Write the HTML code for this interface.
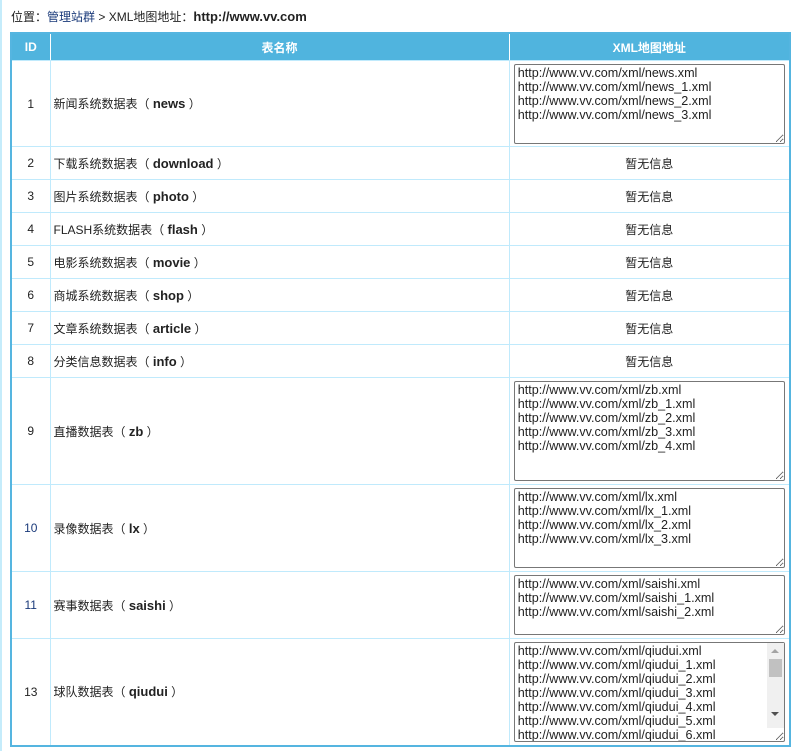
<!DOCTYPE html>
<html><head><meta charset="utf-8"><style>
body{margin:0;width:794px;height:751px;background:#fff;font-family:"Liberation Sans","Noto Sans CJK SC",sans-serif;font-size:12px;color:#222;position:relative;overflow:hidden}
.lstrip{position:absolute;left:0;top:0;width:2px;height:751px;background:#c5ecfb}
.pos{position:absolute;left:11px;top:8px;font-size:12px;color:#222}
.pos a{color:#1a3a7a;text-decoration:none}
.pos b{font-size:13px}
table{position:absolute;left:10px;top:32px;width:781px;border-collapse:collapse;border:2px solid #55b5e0;table-layout:fixed}
td,th{border:1px solid #c0eafc;padding:0;font-size:12px}
th{background:#50b4de;color:#fff;height:26px;font-weight:bold;border-color:#fff #fff #c0eafc #fff;border-top:none}
th:first-child{border-left:none}th:last-child{border-right:none}
td.id{text-align:center;color:#222}
td.id.b{color:#1a3a7a}
td.n{padding-left:3px}
td.n b{font-size:13px}
td.x{text-align:center}
textarea{display:block;margin:0 auto;width:271px;font-family:"Liberation Sans",sans-serif;font-size:12.6px;line-height:14px;border:1px solid #777;border-radius:2px;padding:1px 3px;box-sizing:border-box;resize:both;color:#222;overflow:hidden}
.sb{position:absolute;left:767px;top:643px;width:17px;height:85px;background:#f0f0f0}
.sb i{position:absolute;left:2px;top:16px;width:13px;height:18px;background:#c1c1c1}
.sb .u,.sb .d{position:absolute;left:4px;width:0;height:0;border-left:4px solid transparent;border-right:4px solid transparent}
.sb .u{top:6px;border-bottom:4px solid #a3a3a3}
.sb .d{top:69px;border-top:4px solid #505050}
</style></head><body>
<div class="lstrip"></div>
<div class="pos">位置：<a>管理站群</a> &gt; XML地图地址：<b>http://www.vv.com</b></div>
<table>
<colgroup><col style="width:39px"><col style="width:459px"><col></colgroup>
<tr><th>ID</th><th>表名称</th><th>XML地图地址</th></tr>
<tr style="height:86px"><td class="id">1</td><td class="n">新闻系统数据表（ <b>news</b> ）</td><td><textarea style="height:80px">http://www.vv.com/xml/news.xml
http://www.vv.com/xml/news_1.xml
http://www.vv.com/xml/news_2.xml
http://www.vv.com/xml/news_3.xml</textarea></td></tr>
<tr style="height:33px"><td class="id">2</td><td class="n">下载系统数据表（ <b>download</b> ）</td><td class="x">暂无信息</td></tr>
<tr style="height:33px"><td class="id">3</td><td class="n">图片系统数据表（ <b>photo</b> ）</td><td class="x">暂无信息</td></tr>
<tr style="height:33px"><td class="id">4</td><td class="n">FLASH系统数据表（ <b>flash</b> ）</td><td class="x">暂无信息</td></tr>
<tr style="height:33px"><td class="id">5</td><td class="n">电影系统数据表（ <b>movie</b> ）</td><td class="x">暂无信息</td></tr>
<tr style="height:33px"><td class="id">6</td><td class="n">商城系统数据表（ <b>shop</b> ）</td><td class="x">暂无信息</td></tr>
<tr style="height:33px"><td class="id">7</td><td class="n">文章系统数据表（ <b>article</b> ）</td><td class="x">暂无信息</td></tr>
<tr style="height:33px"><td class="id">8</td><td class="n">分类信息数据表（ <b>info</b> ）</td><td class="x">暂无信息</td></tr>
<tr style="height:107px"><td class="id">9</td><td class="n">直播数据表（ <b>zb</b> ）</td><td><textarea style="height:100px">http://www.vv.com/xml/zb.xml
http://www.vv.com/xml/zb_1.xml
http://www.vv.com/xml/zb_2.xml
http://www.vv.com/xml/zb_3.xml
http://www.vv.com/xml/zb_4.xml</textarea></td></tr>
<tr style="height:87px"><td class="id b">10</td><td class="n">录像数据表（ <b>lx</b> ）</td><td><textarea style="height:80px">http://www.vv.com/xml/lx.xml
http://www.vv.com/xml/lx_1.xml
http://www.vv.com/xml/lx_2.xml
http://www.vv.com/xml/lx_3.xml</textarea></td></tr>
<tr style="height:67px"><td class="id b">11</td><td class="n">赛事数据表（ <b>saishi</b> ）</td><td><textarea style="height:60px">http://www.vv.com/xml/saishi.xml
http://www.vv.com/xml/saishi_1.xml
http://www.vv.com/xml/saishi_2.xml</textarea></td></tr>
<tr style="height:107px"><td class="id">13</td><td class="n">球队数据表（ <b>qiudui</b> ）</td><td><textarea style="height:100px">http://www.vv.com/xml/qiudui.xml
http://www.vv.com/xml/qiudui_1.xml
http://www.vv.com/xml/qiudui_2.xml
http://www.vv.com/xml/qiudui_3.xml
http://www.vv.com/xml/qiudui_4.xml
http://www.vv.com/xml/qiudui_5.xml
http://www.vv.com/xml/qiudui_6.xml
http://www.vv.com/xml/qiudui_7.xml</textarea></td></tr>
</table>
<div class="sb"><span class="u"></span><i></i><span class="d"></span></div>
</body></html>
